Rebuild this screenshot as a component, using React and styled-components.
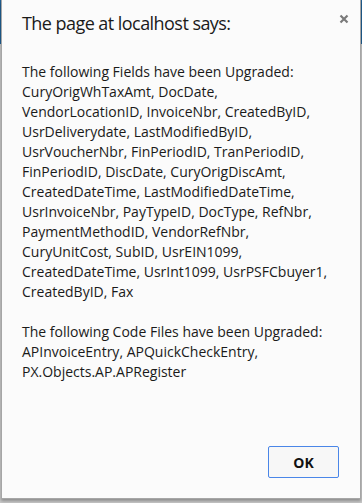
import React from 'react';
import styled, { createGlobalStyle } from 'styled-components';

const fieldLines = [
  'The following Fields have been Upgraded:',
  'CuryOrigWhTaxAmt, DocDate,',
  'VendorLocationID, InvoiceNbr, CreatedByID,',
  'UsrDeliverydate, LastModifiedByID,',
  'UsrVoucherNbr, FinPeriodID, TranPeriodID,',
  'FinPeriodID, DiscDate, CuryOrigDiscAmt,',
  'CreatedDateTime, LastModifiedDateTime,',
  'UsrInvoiceNbr, PayTypeID, DocType, RefNbr,',
  'PaymentMethodID, VendorRefNbr,',
  'CuryUnitCost, SubID, UsrEIN1099,',
  'CreatedDateTime, UsrInt1099, UsrPSFCbuyer1,',
  'CreatedByID, Fax',
];

const codeLines = [
  'The following Code Files have been Upgraded:',
  'APInvoiceEntry, APQuickCheckEntry,',
  'PX.Objects.AP.APRegister',
];

const App = () => {
  return (
    <>
      <GlobalStyle />
      <StBackdrop>
        <StDialog role="dialog">
          <StClose aria-label="close">
            <svg width="10" height="10" viewBox="0 0 10 10">
              <path d="M1.5 1.5 L8.5 8.5 M8.5 1.5 L1.5 8.5" stroke="#7a7a7a" strokeWidth="2.2" />
            </svg>
          </StClose>

          <StTitle>The page at localhost says:</StTitle>

          <StMessage>
            <StParagraph>
              {fieldLines.map((line, idx) => (
                <StLine key={idx}>{line}</StLine>
              ))}
            </StParagraph>
            <StParagraph>
              {codeLines.map((line, idx) => (
                <StLine key={idx}>{line}</StLine>
              ))}
            </StParagraph>
          </StMessage>

          <StFooter>
            <StButton>OK</StButton>
          </StFooter>
        </StDialog>
      </StBackdrop>
    </>
  );
};

export default App;

const GlobalStyle = createGlobalStyle`
  html, body {
    margin: 0;
    padding: 0;
  }

  body {
    font-family: 'Open Sans', 'Noto Sans', sans-serif;
  }
`;

const StBackdrop = styled.div`
  width: 362px;
  height: 503px;
  padding: 0 1px 0 1px;
  box-sizing: border-box;
  background: linear-gradient(to bottom, #1f5f93 0, #1f5f93 44px, #c9c9c9 44px, #c9c9c9 100%);
`;

const StDialog = styled.div`
  position: relative;
  display: flex;
  flex-direction: column;

  height: 499px;
  box-sizing: border-box;
  padding: 10px 20px 0 20px;
  background-color: #fbfbfb;

  border: 1px solid #a6a6a6;
  border-top: none;
  box-shadow: 0 2px 3px rgba(0, 0, 0, 0.3);
`;

const StClose = styled.div`
  position: absolute;
  top: 14px;
  right: 11px;

  display: flex;
  width: 10px;
  height: 10px;
`;

const StTitle = styled.div`
  font-size: 18px;
  line-height: 26px;
  letter-spacing: -0.55px;
  color: #1a1a1a;
`;

const StMessage = styled.div`
  display: flex;
  flex-direction: column;
  gap: 20px;

  margin-top: 26px;
`;

const StParagraph = styled.div`
  display: flex;
  flex-direction: column;
`;

const StLine = styled.div`
  font-size: 14px;
  line-height: 20px;
  color: #1a1a1a;
  white-space: nowrap;
`;

const StFooter = styled.div`
  display: flex;
  justify-content: flex-end;

  margin-top: auto;
  padding-bottom: 20px;
`;

const StButton = styled.button`
  width: 71px;
  height: 32px;
  margin-right: 1px;

  background-color: #f7f7f7;
  border: 1px solid #4a86e8;
  border-radius: 2px;

  font-family: 'Open Sans', 'Noto Sans', sans-serif;
  font-size: 14px;
  font-weight: 700;
  color: #111;
`;
